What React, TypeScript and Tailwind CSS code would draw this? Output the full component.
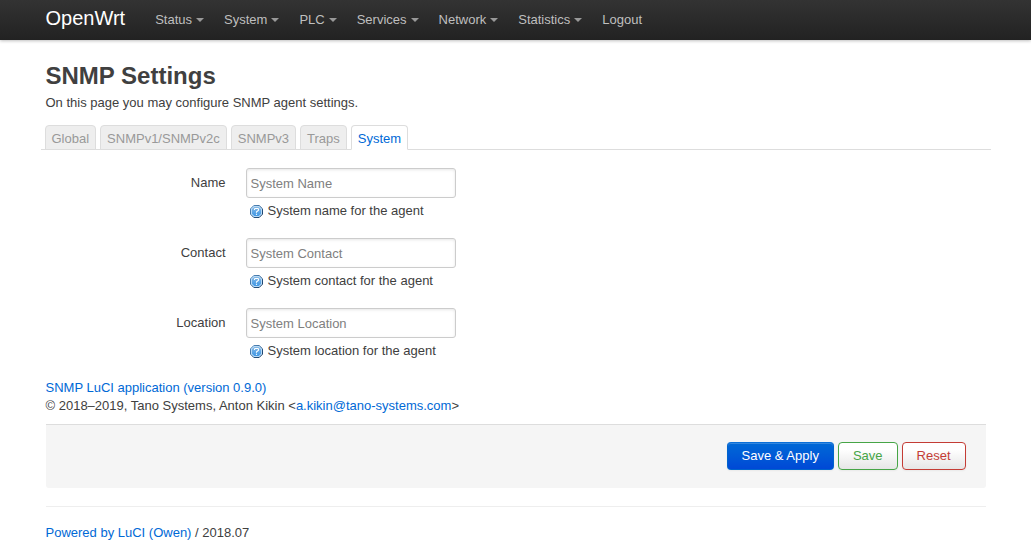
const menus = ['Status', 'System', 'PLC', 'Services', 'Network', 'Statistics'];
const tabs = ['Global', 'SNMPv1/SNMPv2c', 'SNMPv3', 'Traps', 'System'];
const fields = [
  { id: 'name', label: 'Name', placeholder: 'System Name', help: 'System name for the agent' },
  { id: 'contact', label: 'Contact', placeholder: 'System Contact', help: 'System contact for the agent' },
  { id: 'location', label: 'Location', placeholder: 'System Location', help: 'System location for the agent' },
];

function HelpIcon() {
  return (
    <svg className="mt-[3px] h-[13px] w-[13px] shrink-0" viewBox="0 0 13 13" aria-hidden="true">
      <defs>
        <linearGradient id="help-fill" x1="0" y1="0" x2="0" y2="1">
          <stop offset="0" stopColor="#86b8e4" />
          <stop offset="1" stopColor="#3d97e6" />
        </linearGradient>
        <linearGradient id="help-edge" x1="0" y1="0" x2="1" y2="1">
          <stop offset="0" stopColor="#5b93c8" />
          <stop offset="1" stopColor="#12345c" />
        </linearGradient>
      </defs>
      <path d="M3.8.5h5.4l3.3 3.3v5.4l-3.3 3.3H3.8L.5 9.2V3.8z" fill="#b9dbf6" stroke="url(#help-edge)" />
      <path d="M4.3 2h4.4L11 4.3v4.4L8.7 11H4.3L2 8.700V4.300z" fill="url(#help-fill)" />
      <path d="M4.500 5V4.300c0-.5.4-.8.9-.8h2.200c.5 0 .9.3.9.8v.8c0 .8-2 .9-2 2v.6" fill="none" stroke="#fff" strokeWidth="1.1" />
      <path d="M5.900 8.700h1.200v1.200H5.900z" fill="#fff" />
    </svg>
  );
}

export default function App() {
  return (
    <div className="font-['Liberation_Sans',Arial,sans-serif] text-[13px] leading-[18px] text-[#404040]">
      <header className="h-10 bg-linear-to-b from-[#333] to-[#222] shadow-[0_1px_3px_rgba(0,0,0,0.25)]">
        <nav className="mx-auto flex h-10 max-w-[940px] items-center text-[#bfbfbf]">
          <a href="#" className="mr-5 pb-1 text-[20px] leading-5 text-white">OpenWrt</a>
          {menus.map((m) => (
            <a key={m} href="#" className="flex items-center gap-1 px-[10px]">
              {m}
              <span className="border-x-4 border-t-4 border-x-transparent border-t-[#999]" />
            </a>
          ))}
          <a href="#" className="px-[10px]">Logout</a>
        </nav>
      </header>

      <main className="mx-auto max-w-[940px] pt-[18px]">
        <h2 className="text-[24px] leading-9 font-bold">SNMP Settings</h2>
        <p>On this page you may configure SNMP agent settings.</p>

        <ul className="-mx-[5px] mt-[13px] flex gap-1 border-b border-[#ddd] px-1">
          {tabs.map((t) => (
            <li key={t} className="-mb-px">
              <a
                href="#"
                className={
                  t === 'System'
                    ? 'block h-[25px] rounded-t border border-[#ddd] border-b-white bg-white px-[6px] pt-1 text-[#0069d6]'
                    : 'block h-[25px] rounded-t border border-[#ddd] bg-[#eee] px-[6px] pt-1 text-[#999]'
                }
              >
                {t}
              </a>
            </li>
          ))}
        </ul>

        <form>
          <div className="flex flex-col gap-[18px] pt-[18px]">
            {fields.map((f) => (
              <div key={f.id} className="flex gap-5">
                <label htmlFor={f.id} className="w-[180px] shrink-0 pt-[6px] text-right">{f.label}</label>
                <div>
                  <input
                    id={f.id}
                    type="text"
                    placeholder={f.placeholder}
                    className="block h-[30px] w-[210px] rounded-[3px] border border-[#ccc] bg-white px-1 shadow-[inset_0_1px_3px_rgba(0,0,0,0.1)] placeholder:text-[#808080]"
                  />
                  <div className="flex items-start gap-[5px] pt-1 pl-1">
                    <HelpIcon />
                    {f.help}
                  </div>
                </div>
              </div>
            ))}
          </div>

          <p className="pt-[19px]">
            <a href="#" className="text-[#0069d6]">SNMP LuCI application (version 0.9.0)</a>
            <br />© 2018–2019, Tano Systems, Anton Kikin &lt;
            <a href="mailto:a.kikin@tano-systems.com" className="text-[#0069d6]">a.kikin@tano-systems.com</a>&gt;
          </p>

          <div className="mt-[9px] flex justify-end gap-1 rounded-b-[3px] border-t border-[#ddd] bg-[#f5f5f5] px-5 pt-[17px] pb-[18px]">
            <button type="button" className="h-7 rounded border border-[#0064cd] border-t-[#0a6fd8] bg-linear-to-b from-[#0069d6] to-[#0048d6] px-[14px] text-white shadow-[inset_0_1px_0_rgba(255,255,255,0.2),0_1px_2px_rgba(0,0,0,0.05)]">Save &amp; Apply</button>
            <button type="button" className="h-7 rounded border border-[#46a546] bg-linear-to-b from-white from-25% to-[#e6e6e6] px-[14px] text-[#46a546] shadow-[0_1px_2px_rgba(0,0,0,0.05)]">Save</button>
            <button type="button" className="h-7 rounded border border-[#c43c35] bg-linear-to-b from-white from-25% to-[#e6e6e6] px-[14px] text-[#c43c35] shadow-[0_1px_2px_rgba(0,0,0,0.05)]">Reset</button>
          </div>
        </form>

        <footer className="mt-[18px] border-t border-[#eee] pt-[17px]">
          <a href="#" className="text-[#0069d6]">Powered by LuCI (Owen)</a> / 2018.07
        </footer>
      </main>
    </div>
  );
}
